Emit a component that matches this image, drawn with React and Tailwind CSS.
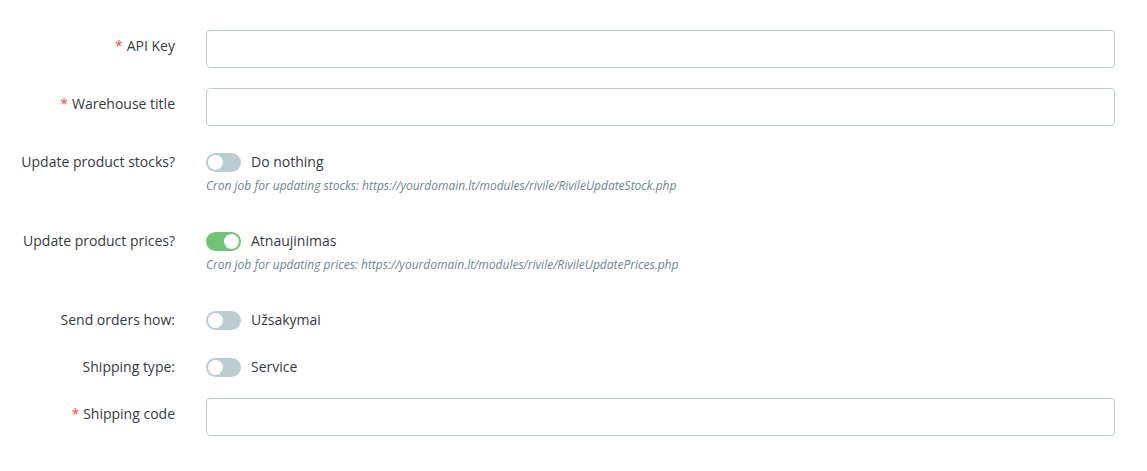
import React from 'react'

function Label({ required, children, className = '' }) {
  return (
    <div className={`w-[175px] shrink-0 text-right ${className}`}>
      {required && <span className="text-[#f54c3e] mr-1">*</span>}
      {children}
    </div>
  )
}

function TextInput() {
  return (
    <input
      type="text"
      className="block w-full h-[38px] rounded-[4px] border border-[#bbcdd2] bg-white px-2 outline-none"
    />
  )
}

function Toggle({ on, label }) {
  return (
    <div className="flex items-center h-5">
      <span
        className={`relative inline-block w-[35px] h-[19px] rounded-full ${on ? 'bg-[#72c279]' : 'bg-[#bbcdd2]'}`}
      >
        <span
          className={`absolute top-[2px] w-[15px] h-[15px] rounded-full bg-white ${on ? 'right-[2px]' : 'left-[2px]'}`}
        />
      </span>
      <span className="ml-[10px]">{label}</span>
    </div>
  )
}

function Help({ children }) {
  return <p className="mt-[5px] leading-[18px] text-[12px] italic text-[#6c868e]">{children}</p>
}

export default function App() {
  return (
    <div
      className="min-h-[471px] bg-white pt-[30px] pr-[32px] text-[14px] leading-5 text-[#363a41]"
      style={{ fontFamily: '"Open Sans", "Liberation Sans", sans-serif' }}
    >
      {/* API Key */}
      <div className="flex items-start">
        <Label required className="pt-[6px]">API Key</Label>
        <div className="flex-1 ml-[31px]"><TextInput /></div>
      </div>

      {/* Warehouse title */}
      <div className="flex items-start mt-[20px]">
        <Label required className="pt-[6px]">Warehouse title</Label>
        <div className="flex-1 ml-[31px]"><TextInput /></div>
      </div>

      {/* Stocks */}
      <div className="flex items-start mt-[26px]">
        <Label>Update product stocks?</Label>
        <div className="flex-1 ml-[31px]">
          <Toggle label="Do nothing" />
          <Help>Cron job for updating stocks: https://yourdomain.lt/modules/rivile/RivileUpdateStock.php</Help>
        </div>
      </div>

      {/* Prices */}
      <div className="flex items-start mt-[36px]">
        <Label>Update product prices?</Label>
        <div className="flex-1 ml-[31px]">
          <Toggle on label="Atnaujinimas" />
          <Help>Cron job for updating prices: https://yourdomain.lt/modules/rivile/RivileUpdatePrices.php</Help>
        </div>
      </div>

      {/* Orders */}
      <div className="flex items-start mt-[36px]">
        <Label>Send orders how:</Label>
        <div className="flex-1 ml-[31px]"><Toggle label="Užsakymai" /></div>
      </div>

      {/* Shipping type */}
      <div className="flex items-start mt-[27px]">
        <Label>Shipping type:</Label>
        <div className="flex-1 ml-[31px]"><Toggle label="Service" /></div>
      </div>

      {/* Shipping code */}
      <div className="flex items-start mt-[21px]">
        <Label required className="pt-[6px]">Shipping code</Label>
        <div className="flex-1 ml-[31px]"><TextInput /></div>
      </div>
    </div>
  )
}
